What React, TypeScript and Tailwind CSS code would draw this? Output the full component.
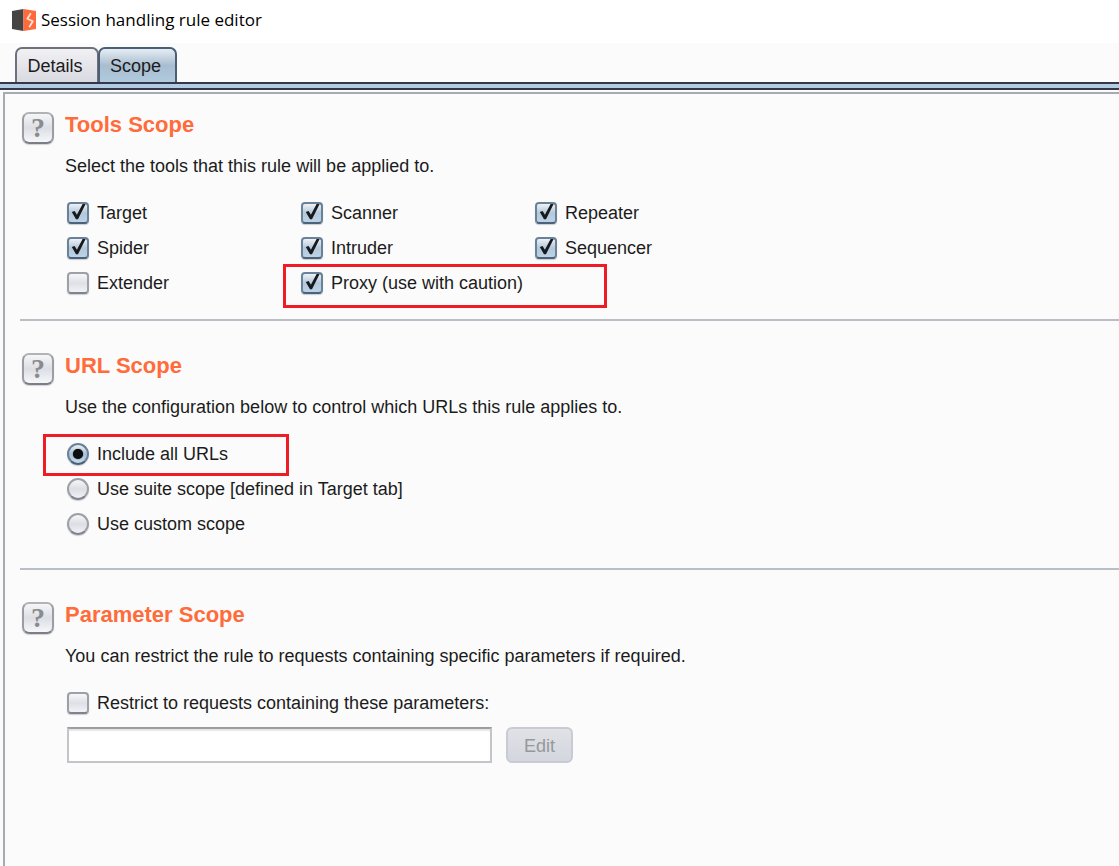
import type { ReactNode } from "react";

function LogoIcon() {
  return (
    <svg width="24" height="22" viewBox="0 0 24 22" aria-hidden="true">
      <path d="M0 2 11.5 0v22L0 20Z" fill="#454443" />
      <path d="M11.5 0 24 2v18l-12.5 2Z" fill="#ff6a3c" />
      <path
        d="M18.8 4.2 15.4 9.8l5.4 2.4-3.6 6"
        fill="none"
        stroke="#ffe3d8"
        strokeWidth="1.8"
        strokeLinejoin="round"
      />
    </svg>
  );
}

function HelpButton({ topic }: { topic: string }) {
  return (
    <button
      type="button"
      aria-label={`Help: ${topic}`}
      className="flex size-8 shrink-0 items-center justify-center rounded-[7px] border-2 border-[#9a9da2] border-t-[#b0b3b7] border-b-[#7b7f85] bg-linear-to-b from-[#f6f6f8] via-[#dcdee5] to-[#f6f7fa] font-['Liberation_Serif',serif] text-[28px] leading-7 font-bold text-[#8a8b8d] shadow-[0_1px_1px_#d0d2d6]"
    >
      ?
    </button>
  );
}

type SectionProps = { title: string; description: string; children: ReactNode };

function Section({ title, description, children }: SectionProps) {
  return (
    <section className="flex gap-[11px] pl-[2px]">
      <HelpButton topic={title} />
      <div className="min-w-0 flex-1">
        <h2 className="pt-px text-[22px] leading-6 font-bold text-[#ff6b3a]">{title}</h2>
        <p className="mt-[17px] mb-[17px] leading-6">{description}</p>
        {children}
      </div>
    </section>
  );
}

function Divider({ className }: { className: string }) {
  return <hr className={`h-[2px] border-0 bg-[#b9bfc4] ${className}`} />;
}

function Highlight({ className }: { className: string }) {
  return <span className={`pointer-events-none absolute border-3 border-[#ee1c25] ${className}`} />;
}

type OptionProps = { label: string; checked?: boolean; highlight?: ReactNode };

function CheckOption({ label, checked = false, highlight }: OptionProps) {
  return (
    <label className="relative flex h-[35px] items-center gap-2 pl-[2px]">
      <span className="relative flex size-[22px] shrink-0">
        <input
          type="checkbox"
          defaultChecked={checked}
          className="peer size-full appearance-none rounded-[4px] border-2 border-[#9da0a6] border-b-[#7f838b] bg-linear-to-b from-[#f7f7f9] via-[#dfe0e6] to-[#f1f2f6] shadow-[0_1px_1px_#c9ccd2] checked:border-[#6a8299] checked:border-b-[#4c6278] checked:from-[#edf2f7] checked:via-[#b4c8da] checked:to-[#bcd2e6]"
        />
        <svg
          className="pointer-events-none absolute inset-0 hidden peer-checked:block"
          width="22"
          height="22"
          viewBox="0 0 22 22"
          aria-hidden="true"
        >
          <path d="M4.8 10 7.6 9l2.3 3.8L15.6 2h3L11 17.2H9Z" fill="#17191c" />
        </svg>
      </span>
      <span className="pt-[2px]">{label}</span>
      {highlight}
    </label>
  );
}

function RadioOption({ label, checked = false, highlight }: OptionProps) {
  return (
    <label className="relative flex h-[35px] w-fit items-center gap-2 pl-[2px]">
      <span className="relative flex size-[22px] shrink-0">
        <input
          type="radio"
          name="url-scope"
          defaultChecked={checked}
          className="peer size-full appearance-none rounded-full border-2 border-[#9da0a6] border-b-[#7f838b] bg-linear-to-b from-[#f7f7f9] via-[#dcdee4] to-[#f1f2f6] shadow-[0_1px_1px_#c9ccd2] checked:border-[#6a8299] checked:border-b-[#4c6278] checked:from-[#edf2f7] checked:via-[#a9c0d4] checked:to-[#c5dbee]"
        />
        <span className="pointer-events-none absolute inset-[6px] hidden rounded-full bg-[#0c0d0f] shadow-[0_0_1px_#0c0d0f] peer-checked:block" />
      </span>
      <span className="pt-[2px]">{label}</span>
      {highlight}
    </label>
  );
}

export default function App() {
  return (
    <div className="flex min-h-screen flex-col overflow-x-hidden bg-[#fbfbfb] font-['Liberation_Sans',Arial,sans-serif] text-[18px] text-[#1b1b1b]">
      <header className="flex h-[43px] items-center gap-[5px] bg-white pb-[3px] pl-3">
        <LogoIcon />
        <h1 className="font-['Open_Sans','Noto_Sans',sans-serif] text-[17px] leading-6 text-black">
          Session handling rule editor
        </h1>
      </header>

      <nav className="flex items-end pt-1 pl-[15px]" role="tablist">
        <button
          type="button"
          role="tab"
          aria-selected="false"
          className="h-[35px] w-[84px] rounded-t-[7px] border-2 border-b-0 border-[#6e717a] bg-linear-to-b from-[#f1f1f4] to-[#d9dae1] pt-[2px] pr-1"
        >
          Details
        </button>
        <button
          type="button"
          role="tab"
          aria-selected="true"
          className="-ml-px h-[35px] w-[79px] rounded-t-[7px] border-2 border-b-0 border-[#4a5f75] bg-linear-to-b from-[#e6edf3] via-[#a9bdd0] to-[#b0cadf] pt-[2px] pr-1"
        >
          Scope
        </button>
      </nav>
      <div className="h-2 border-y-2 border-[#35384a] bg-[#b2cde2]" />

      <main className="mt-[2px] ml-[3px] flex-1 border-t-2 border-l-2 border-[#a4abb2] pt-[18px] pl-[15px]">
        <Section title="Tools Scope" description="Select the tools that this rule will be applied to.">
          <div className="grid w-fit grid-cols-[repeat(3,234px)]">
            <CheckOption label="Target" checked />
            <CheckOption label="Scanner" checked />
            <CheckOption label="Repeater" checked />
            <CheckOption label="Spider" checked />
            <CheckOption label="Intruder" checked />
            <CheckOption label="Sequencer" checked />
            <CheckOption label="Extender" />
            <CheckOption
              label="Proxy (use with caution)"
              checked
              highlight={<Highlight className="top-[-1px] left-[-16px] h-[44px] w-[324px]" />}
            />
          </div>
        </Section>
        <Divider className="mt-[19px] mb-8" />

        <Section
          title="URL Scope"
          description="Use the configuration below to control which URLs this rule applies to."
        >
          <RadioOption
            label="Include all URLs"
            checked
            highlight={<Highlight className="top-[-2px] left-[-22px] h-[42px] w-[246px]" />}
          />
          <RadioOption label="Use suite scope [defined in Target tab]" />
          <RadioOption label="Use custom scope" />
        </Section>
        <Divider className="mt-[27px] mb-8" />

        <Section
          title="Parameter Scope"
          description="You can restrict the rule to requests containing specific parameters if required."
        >
          <CheckOption label="Restrict to requests containing these parameters:" />
          <div className="mt-[7px] flex gap-[14px] pl-[2px]">
            <input
              type="text"
              aria-label="Parameters"
              className="h-9 w-[425px] border-2 border-[#c4c5c8] border-t-[#9c9da0] bg-white px-2 shadow-[inset_0_2px_1px_#e6e6e6]"
            />
            <button
              type="button"
              disabled
              className="h-9 w-[67px] rounded-[6px] border-2 border-[#c8cbd3] bg-linear-to-b from-[#e0e2e7] to-[#d3d6de] pt-[2px] text-[#96989c]"
            >
              Edit
            </button>
          </div>
        </Section>
      </main>
    </div>
  );
}
